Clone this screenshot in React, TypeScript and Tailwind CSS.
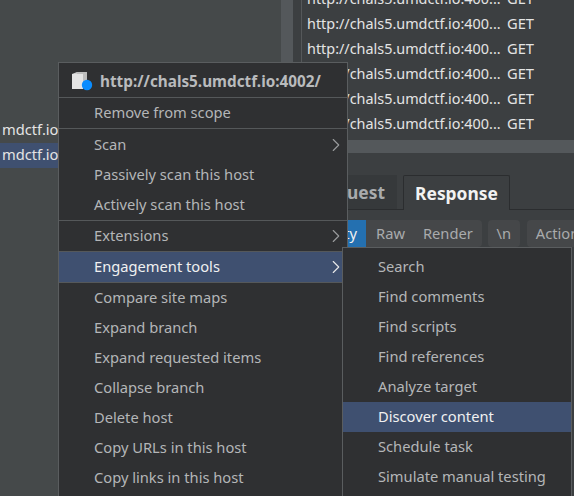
import { ChevronRight } from 'lucide-react'

const font = { fontFamily: '"Noto Sans", "Open Sans", sans-serif' }

function MenuItem({ label, arrow, active, tall }: { label: string; arrow?: boolean; active?: boolean; tall?: boolean }) {
  return (
    <div
      className={`flex items-center justify-between pl-[35px] text-[14.7px] ${tall ? 'h-[32px] border-y border-[#55585a]' : 'h-[30px]'} ${
        active ? 'bg-[#3f5070] text-[#f0f0f0]' : 'text-[#b4b6b8]'
      }`}
    >
      <span className="pb-[2px]">{label}</span>
      {arrow && <ChevronRight size={22} strokeWidth={1.2} className={active ? 'text-[#e8e8e8]' : 'text-[#9a9c9e]'} />}
    </div>
  )
}

const urlRows = Array.from({ length: 6 })

export default function App() {
  return (
    <div style={font} className="relative flex h-[496px] w-[574px] overflow-hidden bg-[#3c3f41] text-[14.7px] text-[#e4e4e4]">
      {/* site map tree */}
      <div className="flex w-[281px] shrink-0 flex-col bg-[#45494a] pt-[118px]">
        <div className="flex h-[25px] items-center pb-[2px] pl-[2px]">mdctf.io</div>
        <div className="flex h-[25px] w-[58px] items-center bg-[#3f5070] pb-[2px] pl-[2px]">mdctf.io</div>
      </div>
      <div className="w-[12px] shrink-0 bg-[#54585b]" />
      <div className="w-[8px] shrink-0" />
      <div className="w-[1px] shrink-0 bg-[#55585a]" />

      <div className="flex min-w-0 flex-1 flex-col">
        {/* proxy history table */}
        <div className="h-[140px] overflow-hidden pl-[5px]">
          <div className="-mt-[14px]">
            {urlRows.map((_, i) => (
              <div key={i} className="flex h-[25px] items-center whitespace-nowrap">
                <span className="w-[200px] text-[14.4px]">http://chals5.umdctf.io:400...</span>
                <span>GET</span>
              </div>
            ))}
          </div>
        </div>
        <div className="h-[13px] bg-[#54585b]" />

        {/* request / response tabs */}
        <div className="mt-[22px] flex h-[35px] items-end border-b border-[#2b2d2f] text-[17.4px] font-bold">
          <div className="flex h-[34px] w-[95px] items-center justify-end bg-[#36393b] pr-[12px] text-[#a9abad]">Request</div>
          <div className="mb-[-1px] ml-[6px] flex h-[35px] w-[107px] items-center justify-center rounded-t-[2px] border border-b-0 border-[#2b2d2f] bg-[#3c3f41] text-[#f2f2f2]">
            Response
          </div>
        </div>

        {/* view buttons */}
        <div className="mt-[10px] flex h-[27px] text-[#a9abad]">
          <div className="flex w-[64px] shrink-0 items-center justify-end bg-[#2470b0] pr-[9px] text-[#f2f2f2]">Pretty</div>
          <div className="flex shrink-0 items-center gap-[18px] rounded-r-[4px] bg-[#454749] pl-[10px] pr-[9px]">
            <span>Raw</span>
            <span>Render</span>
          </div>
          <div className="ml-[6px] flex w-[32px] shrink-0 items-center justify-center rounded-[4px] bg-[#454749]">\n</div>
          <div className="ml-[7px] flex shrink-0 items-center rounded-l-[4px] bg-[#454749] pl-[9px]">Actions</div>
        </div>
      </div>

      {/* context menu */}
      <div className="absolute left-[58px] top-[62px] w-[290px] border border-[#5a5d5f] bg-[#2f3032] pb-[20px]">
        <div className="flex h-[35px] items-center gap-[7px] border-b border-[#55585a] pl-[12px] pt-[2px] text-[15.3px] font-bold text-[#b9bbbd]">
          <svg width="22" height="20" viewBox="0 0 22 20">
            <path d="M6 1h10v14H6z" fill="#bdbdbd" />
            <path d="M1 3h11v15H1z" fill="#e4e4e4" />
            <path d="M1 3l5-2v2z" fill="#cfcfcf" />
            <circle cx="16" cy="14" r="5.2" fill="#0a8cff" />
          </svg>
          <span>http://chals5.umdctf.io:4002/</span>
        </div>
        <MenuItem label="Remove from scope" />
        <div className="h-[1px] bg-[#55585a]" />
        <div className="h-[1px]" />
        <MenuItem label="Scan" arrow />
        <MenuItem label="Passively scan this host" />
        <MenuItem label="Actively scan this host" />
        <div className="h-[1px] bg-[#55585a]" />
        <MenuItem label="Extensions" arrow />
        <MenuItem label="Engagement tools" arrow active tall />
        <MenuItem label="Compare site maps" />
        <MenuItem label="Expand branch" />
        <MenuItem label="Expand requested items" />
        <MenuItem label="Collapse branch" />
        <MenuItem label="Delete host" />
        <MenuItem label="Copy URLs in this host" />
        <MenuItem label="Copy links in this host" />
      </div>

      {/* engagement tools submenu */}
      <div className="absolute left-[342px] top-[247px] w-[230px] border border-[#5a5d5f] bg-[#2f3032] pb-[20px] pt-[4px]">
        <MenuItem label="Search" />
        <MenuItem label="Find comments" />
        <MenuItem label="Find scripts" />
        <MenuItem label="Find references" />
        <MenuItem label="Analyze target" />
        <MenuItem label="Discover content" active />
        <MenuItem label="Schedule task" />
        <MenuItem label="Simulate manual testing" />
      </div>
    </div>
  )
}
